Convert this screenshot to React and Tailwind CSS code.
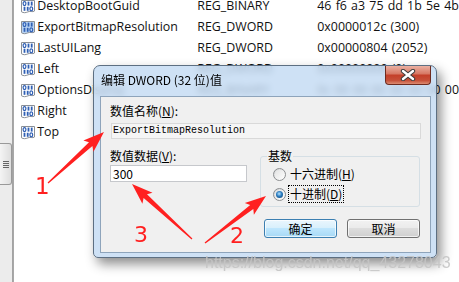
import React from "react";

const rows = [
  ["DesktopBootGuid", "REG_BINARY", "46 f6 a3 75 dd 1b 5e 4b"],
  ["ExportBitmapResolution", "REG_DWORD", "0x0000012c (300)", true],
  ["LastUILang", "REG_DWORD", "0x00000804 (2052)"],
  ["Left", "REG_DWORD", "0x00000000 (0)"],
  ["OptionsDisplay", "REG_BINARY", "0c 00 00 00 00 00 00 00"],
  ["Right", "REG_DWORD", "0x00000000 (0)"],
  ["Top", "REG_DWORD", "0x00000000 (0)"],
];

function BinIcon({ selected }) {
  const c = "#2f5fb4";
  return (
    <svg width="16" height="15" viewBox="0 0 16 15" className="shrink-0">
      <path
        d="M1.5 1.5h13v10.5c-2 1.6-4 -0.4-6.5 0.8s-4.5 1.2-6.5 0z"
        fill={selected ? "#b9d4f3" : "#fff"}
        stroke="#8a8f96"
      />
      <ellipse cx="4.5" cy="4.6" rx="1.4" ry="2" fill="none" stroke={c} strokeWidth="1.2" />
      <rect x="7.6" y="2.6" width="1.8" height="4" fill={c} />
      <rect x="10.8" y="2.6" width="1.8" height="4" fill={c} />
      <rect x="3.6" y="7.8" width="1.8" height="4" fill={c} />
      <rect x="6.8" y="7.8" width="1.8" height="4" fill={c} />
      <ellipse cx="11.3" cy="9.8" rx="1.4" ry="2" fill="none" stroke={c} strokeWidth="1.2" />
    </svg>
  );
}

function arrowPoints(tx, ty, px, py) {
  const dx = px - tx;
  const dy = py - ty;
  const L = Math.hypot(dx, dy);
  const ux = dx / L;
  const uy = dy / L;
  const nx = -uy;
  const ny = ux;
  const h = 18;
  const hw = 7.5;
  const sw = 2.5;
  const back = 3;
  const bx = px - ux * h;
  const by = py - uy * h;
  const pts = [
    [tx + nx * 0.6, ty + ny * 0.6],
    [bx + nx * sw, by + ny * sw],
    [bx - ux * back + nx * hw, by - uy * back + ny * hw],
    [px, py],
    [bx - ux * back - nx * hw, by - uy * back - ny * hw],
    [bx - nx * sw, by - ny * sw],
    [tx - nx * 0.6, ty - ny * 0.6],
  ];
  return pts.map((p) => p[0].toFixed(1) + "," + p[1].toFixed(1)).join(" ");
}

function Radio({ checked }) {
  return (
    <div className="w-[13px] h-[13px] shrink-0 rounded-full border border-[#8c8e90] bg-[linear-gradient(135deg,#d2d4d6,#f6f6f6_70%,#ffffff)] flex items-center justify-center">
      <div className="w-[9px] h-[9px] rounded-full bg-[linear-gradient(135deg,#e4e4e4,#fbfbfb)] flex items-center justify-center">
        {checked && (
          <div className="w-[7px] h-[7px] rounded-full bg-[radial-gradient(circle_at_45%_40%,#b6e4ff,#2b7cc0_45%,#0c3b66)]" />
        )}
      </div>
    </div>
  );
}

export default function App() {
  const cjk = "font-['Noto_Sans_CJK_SC','Noto_Sans',sans-serif]";
  return (
    <div className="relative w-[459px] h-[282px] overflow-hidden bg-white">
      {/* registry list */}
      <div className="flex h-full">
        <div className="w-[14px] h-full bg-[#ececec] border-r border-[#a3a3a3] pt-[143px]">
          <div className="w-[12px] h-[42px] rounded-r-[3px] border border-l-0 border-[#999] bg-[linear-gradient(90deg,#f4f4f4,#dedede)] flex flex-col items-center justify-center gap-[1px]">
            <div className="w-[6px] h-[1px] bg-[#666]" />
            <div className="w-[6px] h-[1px] bg-[#666]" />
            <div className="w-[6px] h-[1px] bg-[#666]" />
            <div className="w-[6px] h-[1px] bg-[#666]" />
          </div>
        </div>
        <div className="w-[5px] h-full bg-white border-r border-[#a8a8a8]" />
        <div className="flex-1 pl-[6px] mt-[-4px] font-['Open_Sans',sans-serif] text-[12.4px] text-[#111] whitespace-nowrap">
          {rows.map(([name, type, data, sel]) => (
            <div key={name} className="flex items-center h-[21px]">
              <div className="w-[177px] flex items-center gap-[1px]">
                <BinIcon selected={sel} />
                <span>{name}</span>
              </div>
              <div className="w-[120px]">{type}</div>
              <div className="[word-spacing:1px]">{data}</div>
            </div>
          ))}
        </div>
      </div>

      {/* dialog */}
      <div
        className={`absolute left-[93px] top-[65px] w-[344px] h-[193px] rounded-t-[7px] rounded-b-[5px] border border-[#5d6f82] bg-[#c2daf2]/80 backdrop-blur-[3px] shadow-[4px_6px_12px_rgba(0,0,0,0.45)] flex flex-col ${cjk}`}
      >
        <div className="h-[30px] flex justify-between">
          <div className="pl-[7px] pt-[6px] text-[12px] leading-[16px] text-black">编辑 DWORD (32 位)值</div>
          <div className="mr-[5px] w-[46px] h-[19px] rounded-b-[4px] border border-t-0 border-[#6e2b1f] bg-[linear-gradient(#eab0a2,#d77a66_42%,#c4402a_52%,#c65039_80%,#dc8c72)] flex items-center justify-center">
            <svg width="16" height="12" viewBox="0 0 16 12">
              <path d="M3 2 L13 10 M13 2 L3 10" stroke="#3b3b3b" strokeWidth="4.4" strokeLinecap="round" />
              <path d="M3 2 L13 10 M13 2 L3 10" stroke="#fff" strokeWidth="2.4" strokeLinecap="round" />
            </svg>
          </div>
        </div>
        <div className="ml-[6px] mr-[5px] h-[157px] border border-[#8ea4bb] bg-[#f0f0f0] pt-[6px] px-[9px] text-[12px] leading-[16px] text-black">
          <div>
            数值名称(<span className="underline">N</span>):
          </div>
          <div className="mt-[4px] ml-[1px] w-[310px] h-[16px] border border-[#d9d9d9] bg-[#f5f5f5] pl-[1px] font-['Liberation_Mono',monospace] text-[10px] leading-[14px]">
            ExportBitmapResolution
          </div>
          <div className="flex mt-[7px]">
            <div className="w-[137px] pt-[2px]">
              <div>
                数值数据(<span className="underline">V</span>):
              </div>
              <div className="mt-[1px] h-[17px] border border-[#c6c8cc] bg-white pl-[2px] leading-[15px]">300</div>
            </div>
            <div className="ml-[13px]">
              <fieldset className="mt-[2px] w-[160px] h-[59px] border border-[#d5dfe5] rounded-[3px] pl-[12px]">
                <legend className="ml-[-6px] px-[1px]">基数</legend>
                <div className="mt-[2px] flex items-center h-[16px] gap-[3px]">
                  <Radio />
                  <span className="px-[1px]">
                    十六进制(<span className="underline">H</span>)
                  </span>
                </div>
                <div className="mt-[4px] flex items-center h-[16px] gap-[3px]">
                  <Radio checked />
                  <span className="px-[1px] outline outline-1 outline-dotted outline-black">
                    十进制(<span className="underline">D</span>)
                  </span>
                </div>
              </fieldset>
              <div className="mt-[12px] ml-[4px] flex gap-[10px]">
                <div className="w-[73px] h-[19px] rounded-[3px] border border-[#3c7fb1] bg-[linear-gradient(#eaf6fd,#d9f0fc_45%,#bee6fd_50%,#a7d9f5)] shadow-[inset_0_0_0_1px_rgba(255,255,255,0.7)] flex items-center justify-center">
                  确定
                </div>
                <div className="w-[73px] h-[19px] rounded-[3px] border border-[#707070] bg-[linear-gradient(#f2f2f2,#ebebeb_45%,#dddddd_50%,#cfcfcf)] shadow-[inset_0_0_0_1px_rgba(255,255,255,0.7)] flex items-center justify-center">
                  取消
                </div>
              </div>
            </div>
          </div>
        </div>
      </div>

      {/* annotations */}
      <svg className="absolute inset-0" width="459" height="282">
        <polygon points={arrowPoints(48, 183, 104, 132)} fill="#ff2020" />
        <polygon points={arrowPoints(192, 239, 132, 184)} fill="#ff2020" />
        <polygon points={arrowPoints(205, 243, 266, 196)} fill="#ff2020" />
      </svg>
      <div className="absolute left-[35px] top-[175px] font-['DejaVu_Sans',sans-serif] text-[23px] leading-none text-[#ff2020]">1</div>
      <div className="absolute left-[134px] top-[224px] font-['DejaVu_Sans',sans-serif] text-[22px] leading-none text-[#ff2020]">3</div>
      <div className="absolute left-[230px] top-[225px] font-['DejaVu_Sans',sans-serif] text-[22px] leading-none text-[#ff2020]">2</div>

      {/* watermark */}
      <div className="absolute left-[205px] top-[255px] font-['Liberation_Sans',Arial,sans-serif] text-[16px] leading-[16px] text-[#c4c4c4]/90 whitespace-nowrap">
        https://blog.csdn.net/qq_43278043
      </div>
    </div>
  );
}
